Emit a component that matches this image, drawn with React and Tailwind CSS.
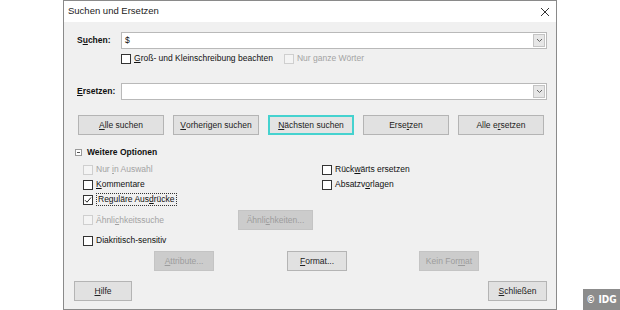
import React from 'react'

const font = { fontFamily: '"Liberation Sans", Arial, sans-serif' }

function U({ children }) {
  return <span className="underline underline-offset-1">{children}</span>
}

function Box({ checked, disabled }) {
  return (
    <span
      className={`flex h-[10px] w-[10px] shrink-0 items-center justify-center border ${
        disabled ? 'border-[#cfcfcf] bg-[#f4f4f4]' : 'border-[#333333] bg-white'
      }`}
    >
      {checked && (
        <svg width="8" height="8" viewBox="0 0 8 8">
          <path d="M1 4.2 L3 6.2 L7 1.5" fill="none" stroke="#222" strokeWidth="1" />
        </svg>
      )}
    </span>
  )
}

function Check({ children, checked, disabled, focus }) {
  return (
    <div className="flex items-center gap-[3px]">
      <Box checked={checked} disabled={disabled} />
      <span
        className={`leading-none ${disabled ? 'text-[#a3a3a3]' : 'text-[#111]'} ${
          focus ? 'border border-dotted border-[#333] px-[1px] py-[1px]' : ''
        }`}
      >
        {children}
      </span>
    </div>
  )
}

function Btn({ children, w, disabled, active }) {
  let cls = 'border-[#b4b4b4] bg-[#e1e1e1] text-[#222]'
  if (disabled) cls = 'border-[#c4c4c4] bg-[#cccccc] text-[#9c9c9c]'
  if (active) cls = 'border-2 border-[#45d2cf] bg-[#e4e4e4] text-[#222]'
  return (
    <div className={`flex h-[20px] items-center justify-center border ${cls} ${w}`}>{children}</div>
  )
}

function Arrow() {
  return (
    <div className="my-[1px] mr-[1px] flex w-[12px] items-center justify-center border border-[#c4c4c4] bg-[#e6e6e6]">
      <svg width="7" height="5" viewBox="0 0 7 5">
        <path d="M1 1 L3.5 3.5 L6 1" fill="none" stroke="#666" strokeWidth="1" />
      </svg>
    </div>
  )
}

export default function App() {
  return (
    <div className="relative h-[310px] w-[620px] overflow-hidden bg-white text-[8.5px]" style={font}>
      <div className="ml-[63px] flex h-[310px] w-[494px] flex-col border border-[#8a8a8a] bg-[#f0f0f0]">
        {/* title bar */}
        <div className="flex h-[21px] items-center justify-between bg-white pl-[4px] pr-[6px]">
          <span className="text-[9.5px] text-[#222]">Suchen und Ersetzen</span>
          <svg width="10" height="10" viewBox="0 0 10 10">
            <path d="M1 1 L9 9 M9 1 L1 9" stroke="#333" strokeWidth="1" />
          </svg>
        </div>

        <div className="flex flex-col pl-[13px] pr-[9px] pt-[10px]">
          <div className="flex items-center">
            <span className="w-[44px] font-bold text-[#111]">
              S<U>u</U>chen:
            </span>
            <div className="flex h-[17px] flex-1 items-stretch border border-[#b9b9b9] bg-white">
              <span className="flex flex-1 items-center pl-[3px] text-[#111]">$</span>
              <Arrow />
            </div>
          </div>

          <div className="mt-[4px] flex h-[11px] items-center gap-[11px] pl-[44px]">
            <Check>
              <U>G</U>roß- und Kleinschreibung beachten
            </Check>
            <Check disabled>Nur ganze Wörter</Check>
          </div>

          <div className="mt-[19px] flex items-center">
            <span className="w-[44px] font-bold text-[#111]">
              <U>E</U>rsetzen:
            </span>
            <div className="flex h-[17px] flex-1 items-stretch border border-[#b9b9b9] bg-white">
              <div className="flex-1" />
              <Arrow />
            </div>
          </div>

          <div className="mt-[15px] flex gap-[9px] pl-[1px]">
            <Btn w="w-[86px]">
              <U>A</U>lle suchen
            </Btn>
            <Btn w="w-[86px]">
              <U>V</U>orherigen suchen
            </Btn>
            <Btn w="w-[86px]" active>
              <U>N</U>ächsten suchen
            </Btn>
            <Btn w="w-[86px]">
              Erse<U>t</U>zen
            </Btn>
            <Btn w="w-[86px]">
              Alle e<U>r</U>setzen
            </Btn>
          </div>

          <div className="mt-[12px] flex h-[11px] items-center gap-[5px]">
            <span className="ml-[-2px] flex h-[7px] w-[7px] items-center justify-center border border-[#9a9a9a] bg-white">
              <span className="h-[1px] w-[3px] bg-[#555]" />
            </span>
            <span className="font-bold text-[#111]">Weitere Optionen</span>
          </div>

          <div className="mt-[4px] grid grid-cols-[239px_1fr] pl-[6px]">
            <div className="flex h-[15px] items-center">
              <Check disabled>
                Nur <U>i</U>n Auswahl
              </Check>
            </div>
            <div className="flex h-[15px] items-center">
              <Check>
                Rück<U>w</U>ärts ersetzen
              </Check>
            </div>
            <div className="flex h-[15px] items-center">
              <Check>
                <U>K</U>ommentare
              </Check>
            </div>
            <div className="flex h-[15px] items-center">
              <Check>
                Absatzv<U>o</U>rlagen
              </Check>
            </div>
            <div className="flex h-[15px] items-center">
              <Check checked focus>
                Reguläre Aus<U>d</U>rücke
              </Check>
            </div>
          </div>

          <div className="mt-[3px] flex h-[20px] items-center pl-[6px]">
            <div className="w-[155px]">
              <Check disabled>
                Ähnli<U>c</U>hkeitssuche
              </Check>
            </div>
            <Btn w="w-[75px]" disabled>
              Ähnli<U>c</U>hkeiten...
            </Btn>
          </div>

          <div className="mt-[3px] flex h-[15px] items-center pl-[6px]">
            <Check>Diakritisch-sensitiv</Check>
          </div>

          <div className="mt-[3px] flex pl-[77px]">
            <Btn w="w-[60px]" disabled>
              <U>A</U>ttribute...
            </Btn>
            <div className="ml-[73px]">
              <Btn w="w-[60px]">
                <U>F</U>ormat...
              </Btn>
            </div>
            <div className="ml-[72px]">
              <Btn w="w-[60px]" disabled>
                Kein For<U>m</U>at
              </Btn>
            </div>
          </div>

          <div className="mt-[10px] flex justify-between">
            <div className="ml-[-3px]">
              <Btn w="w-[58px]">
                <U>H</U>ilfe
              </Btn>
            </div>
            <Btn w="w-[59px]">
              <U>S</U>chließen
            </Btn>
          </div>
        </div>
      </div>

      <div
        className="absolute bottom-0 right-0 flex h-[21px] w-[37px] items-center justify-center bg-[#8c8c8c] text-[10px] font-bold text-white"
        style={{ fontFamily: '"DejaVu Sans Condensed", "DejaVu Sans", sans-serif' }}
      >
        © IDG
      </div>
    </div>
  )
}
